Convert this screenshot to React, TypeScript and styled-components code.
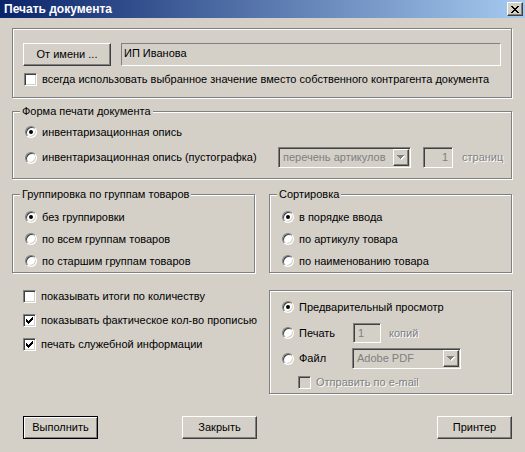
import styled, { createGlobalStyle, css } from 'styled-components';

const FACE = '#d4d0c8';
const SHADOW = '#808080';
const DARK = '#404040';

const GlobalStyle = createGlobalStyle`
  * { box-sizing: border-box; }
  body { margin: 0; background: ${FACE}; }
`;

// pixel glyphs: each cell is [x, y, width] of a one-pixel-high run
const pixels = (cells: number[][]) =>
  cells.map(([x, y, w]) => `M${x} ${y}h${w}v1h-${w}z`).join('');

const CROSS = pixels([
  [0, 0, 2], [6, 0, 2], [1, 1, 2], [5, 1, 2], [2, 2, 4], [3, 3, 2],
  [2, 4, 4], [1, 5, 2], [5, 5, 2], [0, 6, 2], [6, 6, 2],
]);
const TICK = pixels([
  [6, 0, 1], [5, 1, 2], [0, 2, 1], [4, 2, 3], [0, 3, 2], [3, 3, 3],
  [0, 4, 5], [1, 5, 3], [2, 6, 1],
]);
const ARROW = pixels([[0, 0, 7], [1, 1, 5], [2, 2, 3], [3, 3, 1]]);

const sunken = css`
  border: 1px solid;
  border-color: ${SHADOW} #fff #fff ${SHADOW};
  box-shadow: inset 1px 1px ${DARK}, inset -1px -1px ${FACE};
`;

const raised = css`
  border: 1px solid;
  border-color: #fff ${DARK} ${DARK} #fff;
  box-shadow: inset -1px -1px ${SHADOW};
`;

const Window = styled.div`
  width: 525px;
  height: 452px;
  overflow: hidden;
  background: ${FACE};
  font-family: 'Liberation Sans', Arial, sans-serif;
  font-size: 11px;
  line-height: 13px;
  color: #000;
`;

const TitleBar = styled.header`
  height: 18px;
  display: flex;
  align-items: center;
  justify-content: space-between;
  padding: 0 2px 0 4px;
  background: linear-gradient(to right, #0a246a, #a6caf0);
  color: #fff;
  font-size: 12px;
  font-weight: bold;
`;

const CloseButton = styled.button`
  ${raised};
  width: 16px;
  height: 14px;
  padding: 0;
  background: ${FACE};
  display: flex;
  align-items: center;
  justify-content: center;
`;

const Body = styled.main`
  display: flex;
  flex-direction: column;
  padding: 10px 13px 0 12px;
`;

const Group = styled.section<{ $height: number; $top?: number; $pad: string }>`
  position: relative;
  flex: none;
  height: ${(p) => p.$height}px;
  margin-top: ${(p) => p.$top ?? 0}px;
  padding: ${(p) => p.$pad};
  border: 1px solid ${SHADOW};
  box-shadow: inset 1px 1px #fff, 1px 1px #fff;
  display: flex;
  flex-direction: column;
`;

const Caption = styled.span`
  position: absolute;
  top: -7px;
  left: 7px;
  padding: 0 2px;
  background: ${FACE};
`;

const Row = styled.div<{ $height?: number; $top?: number; $indent?: number }>`
  flex: none;
  display: flex;
  align-items: center;
  height: ${(p) => p.$height ?? 18}px;
  margin-top: ${(p) => p.$top ?? 0}px;
  padding-left: ${(p) => p.$indent ?? 0}px;
`;

const Option = styled.label<{ $width?: number }>`
  flex: none;
  display: flex;
  align-items: center;
  gap: 5px;
  width: ${(p) => (p.$width ? `${p.$width}px` : 'auto')};
  white-space: nowrap;
`;

const Text = styled.span<{ $disabled?: boolean; $left?: number }>`
  white-space: nowrap;
  margin-left: ${(p) => p.$left ?? 0}px;
  color: ${(p) => (p.$disabled ? SHADOW : '#000')};
  text-shadow: ${(p) => (p.$disabled ? '1px 1px #fff' : 'none')};
`;

const RadioMark = styled.span<{ $checked?: boolean }>`
  ${sunken};
  position: relative;
  flex: none;
  width: 12px;
  height: 12px;
  border-radius: 50%;
  background: #fff;

  &::after {
    content: '';
    display: ${(p) => (p.$checked ? 'block' : 'none')};
    position: absolute;
    left: 3px;
    top: 3px;
    width: 4px;
    height: 4px;
    border-radius: 50%;
    background: #000;
  }
`;

const CheckMark = styled.span<{ $disabled?: boolean }>`
  ${sunken};
  flex: none;
  width: 13px;
  height: 13px;
  background: ${(p) => (p.$disabled ? FACE : '#fff')};
  display: flex;
  align-items: center;
  justify-content: center;
`;

const Edit = styled.div<{ $width: number; $height?: number; $left?: number; $right?: boolean }>`
  ${sunken};
  flex: none;
  width: ${(p) => p.$width}px;
  height: ${(p) => p.$height ?? 21}px;
  margin-left: ${(p) => p.$left ?? 0}px;
  padding: 0 4px;
  display: flex;
  align-items: center;
  justify-content: ${(p) => (p.$right ? 'flex-end' : 'flex-start')};
  background: ${FACE};
  color: ${SHADOW};
`;

const StaticBox = styled.div`
  flex: 1;
  height: 23px;
  margin-left: 10px;
  padding: 3px 2px 0;
  border: 1px solid;
  border-color: ${SHADOW} #fff #fff ${SHADOW};
`;

const ComboArrow = styled.span`
  ${raised};
  margin-left: auto;
  margin-right: -3px;
  width: 16px;
  height: 17px;
  background: ${FACE};
  display: flex;
  align-items: center;
  justify-content: center;
`;

const PushButton = styled.button<{ $width: number; $default?: boolean; $left?: string }>`
  ${raised};
  flex: none;
  width: ${(p) => p.$width}px;
  height: 23px;
  margin-left: ${(p) => p.$left ?? '0'};
  padding: 0;
  background: ${FACE};
  font: inherit;
  color: #000;
  ${(p) =>
    p.$default &&
    css`
      border-color: #000;
      box-shadow: inset 1px 1px #fff, inset -1px -1px ${SHADOW};
    `}
`;

const Pair = styled.div`
  display: grid;
  grid-template-columns: 243px 243px;
  column-gap: 14px;
  margin-top: 15px;
`;

const Lower = styled.div`
  display: grid;
  grid-template-columns: 257px 243px;
  margin-top: 17px;
`;

const CheckList = styled.div`
  display: flex;
  flex-direction: column;
  gap: 11px;
  padding-left: 11px;
`;

const Footer = styled.footer`
  display: flex;
  margin-top: 22px;
  padding-left: 11px;
`;

function Radio({ checked, label, width }: { checked?: boolean; label: string; width?: number }) {
  return (
    <Option $width={width}>
      <RadioMark $checked={checked} />
      <Text>{label}</Text>
    </Option>
  );
}

function Check({ checked, disabled, label }: { checked?: boolean; disabled?: boolean; label: string }) {
  return (
    <Option>
      <CheckMark $disabled={disabled}>
        {checked && (
          <svg width="7" height="7" viewBox="0 0 7 7" shapeRendering="crispEdges">
            <path d={TICK} fill="#000" />
          </svg>
        )}
      </CheckMark>
      <Text $disabled={disabled}>{label}</Text>
    </Option>
  );
}

function Combo({ value, width }: { value: string; width: number }) {
  return (
    <Edit $width={width}>
      <span>{value}</span>
      <ComboArrow>
        <svg width="8" height="5" viewBox="0 0 8 5" shapeRendering="crispEdges">
          <path d={ARROW} fill="#fff" transform="translate(1 1)" />
          <path d={ARROW} fill={SHADOW} />
        </svg>
      </ComboArrow>
    </Edit>
  );
}

export default function App() {
  return (
    <Window>
      <GlobalStyle />
      <TitleBar>
        <span>Печать документа</span>
        <CloseButton>
          <svg width="8" height="7" viewBox="0 0 8 7" shapeRendering="crispEdges">
            <path d={CROSS} fill="#000" />
          </svg>
        </CloseButton>
      </TitleBar>

      <Body>
        <Group $height={70} $pad="14px 10px 0 10px">
          <Row $height={23}>
            <PushButton $width={88}>От имени ...</PushButton>
            <StaticBox>ИП Иванова</StaticBox>
          </Row>
          <Row $height={13} $top={7} $indent={1}>
            <Check label="всегда использовать выбранное значение вместо собственного контрагента документа" />
          </Row>
        </Group>

        <Group $height={68} $top={13} $pad="11px 12px 0 12px">
          <Caption>Форма печати документа</Caption>
          <Row>
            <Radio checked label="инвентаризационная опись" />
          </Row>
          <Row $height={21} $top={6}>
            <Radio width={253} label="инвентаризационная опись (пустографка)" />
            <Combo width={133} value="перечень артикулов" />
            <Edit $width={30} $left={12} $right>
              1
            </Edit>
            <Text $disabled $left={9}>
              страниц
            </Text>
          </Row>
        </Group>

        <Pair>
          <Group $height={79} $pad="13px 12px 0 12px">
            <Caption>Группировка по группам товаров</Caption>
            <Row>
              <Radio checked label="без группировки" />
            </Row>
            <Row $top={4}>
              <Radio label="по всем группам товаров" />
            </Row>
            <Row $top={4}>
              <Radio label="по старшим группам товаров" />
            </Row>
          </Group>
          <Group $height={79} $pad="13px 12px 0 12px">
            <Caption>Сортировка</Caption>
            <Row>
              <Radio checked label="в порядке ввода" />
            </Row>
            <Row $top={4}>
              <Radio label="по артикулу товара" />
            </Row>
            <Row $top={4}>
              <Radio label="по наименованию товара" />
            </Row>
          </Group>
        </Pair>

        <Lower>
          <CheckList>
            <Check label="показывать итоги по количеству" />
            <Check checked label="показывать фактическое кол-во прописью" />
            <Check checked label="печать служебной информации" />
          </CheckList>
          <Group $height={104} $pad="7px 12px 0 12px">
            <Row>
              <Radio checked label="Предварительный просмотр" />
            </Row>
            <Row $height={20} $top={7}>
              <Radio width={71} label="Печать" />
              <Edit $width={28} $height={20}>
                1
              </Edit>
              <Text $disabled $left={8}>
                копий
              </Text>
            </Row>
            <Row $height={21} $top={5}>
              <Radio width={70} label="Файл" />
              <Combo width={109} value="Adobe PDF" />
            </Row>
            <Row $height={14} $top={6} $indent={16}>
              <Check disabled label="Отправить по e-mail" />
            </Row>
          </Group>
        </Lower>

        <Footer>
          <PushButton $width={75} $default>
            Выполнить
          </PushButton>
          <PushButton $width={75} $left="84px">
            Закрыть
          </PushButton>
          <PushButton $width={75} $left="auto">
            Принтер
          </PushButton>
        </Footer>
      </Body>
    </Window>
  );
}
